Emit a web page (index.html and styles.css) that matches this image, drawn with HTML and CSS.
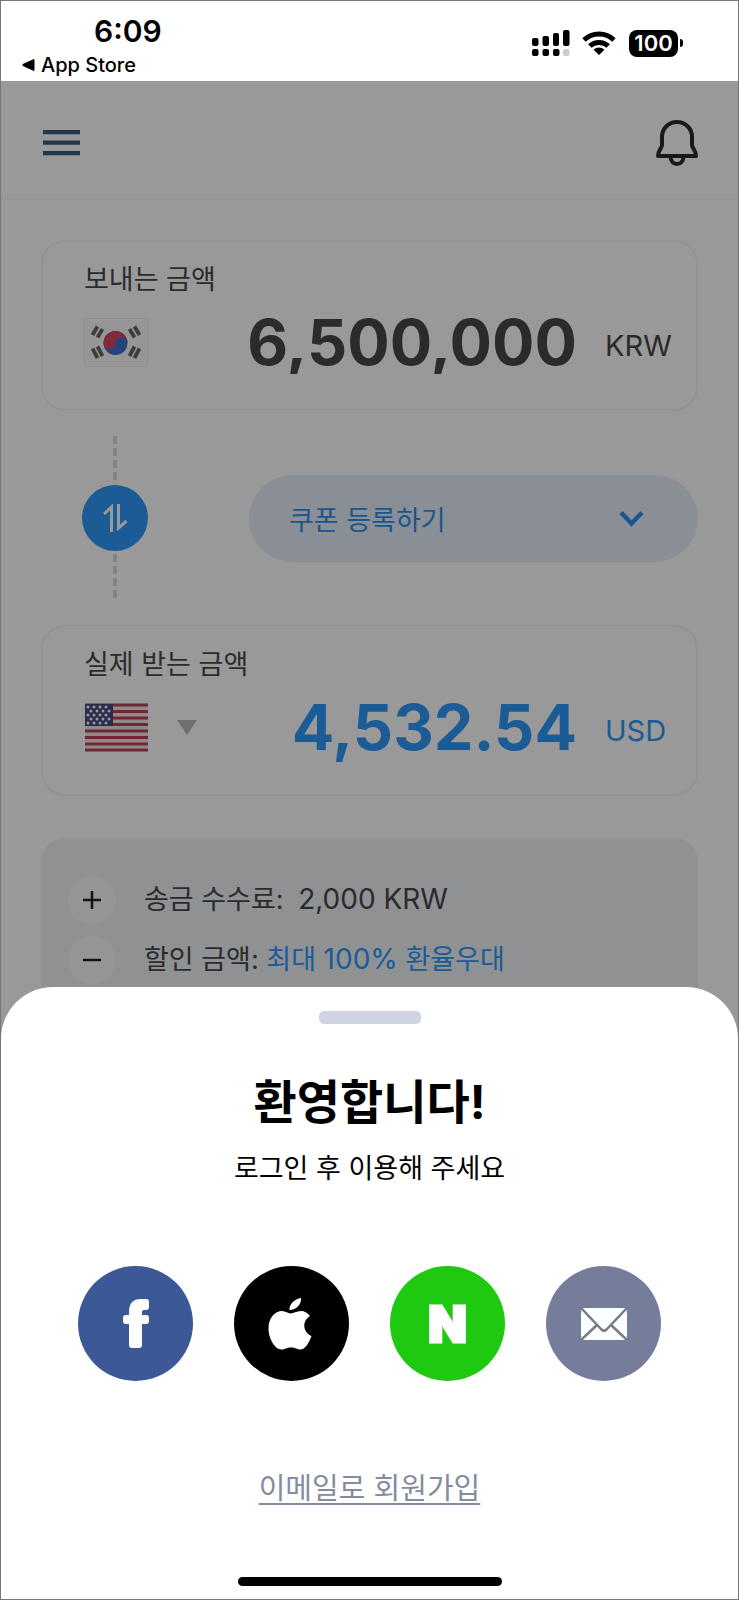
FILE: index.html
```html
<!DOCTYPE html>
<html lang="ko">
<head>
<meta charset="utf-8">
<meta name="viewport" content="width=device-width, initial-scale=1">
<title>환영합니다!</title>
<link rel="stylesheet" href="styles.css">
</head>
<body>
<div class="screen">
  <div class="status-bar">
    <div class="status-left">
      <span class="clock">6:09</span>
      <a class="back-app" href="#">
        <svg width="13" height="14" viewBox="0 0 13 14" aria-hidden="true"><path d="M12 1.500v11L1 7.600Q0 7 1 6.400z" fill="#000" stroke="#000" stroke-linejoin="round"/></svg>
        <span>App Store</span>
      </a>
    </div>
    <div class="status-right">
      <svg width="38" height="26" viewBox="0 0 38 26" aria-hidden="true">
        <rect x="0" y="8" width="6.500" height="8" rx="2"/><rect x="10.500" y="6" width="6.500" height="10" rx="2"/><rect x="21" y="3" width="6" height="13" rx="2"/><rect x="31" y="0" width="6.500" height="16" rx="2"/>
        <rect x="0" y="19" width="6.500" height="7" rx="2"/><rect x="10.500" y="19" width="6.500" height="7" rx="2"/><rect x="21" y="19" width="6.500" height="7" rx="2"/><rect x="31" y="19" width="6.500" height="7" rx="2" fill="#ccc"/>
      </svg>
      <svg class="wifi" width="34" height="24" viewBox="0 0 34 24" aria-hidden="true">
        <g fill="none" stroke="#000" stroke-width="5"><path d="M2 9a21.500 21.500 0 0 1 30 0"/><path d="M7.800 15a13.500 13.500 0 0 1 18.400 0"/></g>
        <path d="M11.500 18.800a8 8 0 0 1 11 0L17 24z"/>
      </svg>
      <span class="battery"><span class="battery-level">100</span></span>
    </div>
  </div>

  <div class="stage">
    <div class="app">
      <header class="app-header">
        <button class="icon-button" type="button" aria-label="메뉴">
          <svg width="37" height="26" viewBox="0 0 37 26"><path d="M0 2.200h37M0 12.700h37M0 23.200h37" stroke="#3c5a82" stroke-width="4.200"/></svg>
        </button>
        <button class="icon-button" type="button" aria-label="알림">
          <svg width="42" height="46" viewBox="0 0 42 46"><g fill="none" stroke="#2b2b2b" stroke-width="4" stroke-linejoin="round"><path d="M21 2C12 2 6 9 6 17v8c0 3-4 5-4 11h38c0-6-4-8-4-11v-8C36 9 30 2 21 2z"/><path d="M14.500 36c0 5 3 8 6.500 8s6.500-3 6.500-8"/></g></svg>
        </button>
      </header>

      <main class="content">
        <section class="card">
          <label class="card-label" for="send">보내는 금액</label>
          <div class="card-row">
            <svg class="flag" width="64" height="49" viewBox="0 0 64 49" aria-hidden="true">
              <rect x=".5" y=".5" width="63" height="48" rx="2" fill="#fafafa" stroke="#ececec"/>
              <circle cx="31.500" cy="25" r="12" fill="#3f73cc"/><path d="M19.500 25a12 12 0 0 1 24 0a6 6 0 0 0-12 0a6 6 0 0 1-12 0" fill="#d94561"/>
              <g stroke="#666" stroke-width="3.800"><path d="M8.500 17l5-8.500M13.500 19.500l5-8.500M8.500 30.500l5 9.500M13.500 28.500l5 9.500M55.500 17l-5-8.500M50.500 19.500l-5-8.500M55.500 30.500l-5 9.500M50.500 28.500l-5 9.500"/></g>
            </svg>
            <input class="amount" id="send" type="text" inputmode="numeric" value="6,500,000">
            <span class="currency">KRW</span>
          </div>
        </section>

        <div class="exchange">
          <div class="connector">
            <span class="dash"></span>
            <button class="swap" type="button" aria-label="통화 바꾸기">
              <svg width="25" height="28" viewBox="0 0 25 28"><path d="M1 10l7.500-7v25M15.500 0v24l8-7" fill="none" stroke="#fff" stroke-width="3"/></svg>
            </button>
            <span class="dash"></span>
          </div>
          <button class="coupon" type="button">
            <span>쿠폰 등록하기</span>
            <svg width="25" height="17" viewBox="0 0 25 17" aria-hidden="true"><path d="M2 2.500l10.500 11L23 2.500" fill="none" stroke="#2f90ef" stroke-width="4.500"/></svg>
          </button>
        </div>

        <section class="card">
          <label class="card-label" for="receive">실제 받는 금액</label>
          <div class="card-row">
            <button class="country" type="button" aria-label="받는 나라 선택">
              <svg class="flag" width="64" height="49" viewBox="0 0 64 49" aria-hidden="true">
                <rect x="1" y="1" width="63" height="47" fill="#f4e4e8"/>
                <path d="M1 2h63M1 8.500h63M1 15h63M1 21.500h63M1 28h63M1 34.500h63M1 41h63M1 47h63" stroke="#bd4058" stroke-width="3"/>
                <rect x="1" y="1" width="28" height="22" fill="#48487c"/>
                <path d="M4 4h24M7 8h20M4 12h24M7 16h20M4 20h24" stroke="#fff" stroke-width="3" stroke-linecap="round" stroke-dasharray="0 6"/>
              </svg>
              <svg width="20" height="15" viewBox="0 0 20 15" aria-hidden="true"><path d="M0 0h20L10 15z" fill="#bbb"/></svg>
            </button>
            <output class="amount accent" id="receive">4,532.54</output>
            <span class="currency accent">USD</span>
          </div>
        </section>

        <section class="fees">
          <div class="fee">
            <span class="sign"><svg width="18" height="18" viewBox="0 0 18 18"><path d="M0 9h18M9 0v18" stroke="#222" stroke-width="2.500"/></svg></span>
            <p class="fee-text">송금 수수료: <span class="fee-value">2,000 KRW</span></p>
          </div>
          <div class="fee">
            <span class="sign"><svg width="18" height="18" viewBox="0 0 18 18"><path d="M0 9h18" stroke="#222" stroke-width="2.500"/></svg></span>
            <p class="fee-text">할인 금액: <span class="accent">최대 <span class="latin">100%</span> 환율우대</span></p>
          </div>
        </section>
      </main>
    </div>

    <div class="backdrop">
      <section class="sheet" role="dialog" aria-labelledby="welcome">
        <span class="handle"></span>
        <h1 class="title" id="welcome">환영합니다!</h1>
        <p class="subtitle">로그인 후 이용해 주세요</p>
        <div class="logins">
          <button class="login facebook" type="button" aria-label="Facebook">
            <svg width="28" height="51" viewBox="0 0 28 51"><path d="M8 16V14C8 6 12 2 19 2h5q2 0 2 2v5q0 2-2 2h-2q-3 0-3 3v4h5q2 0 2 2v3q0 2-2 2h-5v22q0 2-2 2h-7q-2 0-2-2V25H4q-2 0-2-2v-3q0-2 2-2h4z" fill="#fff" stroke="#fff" stroke-width="2" stroke-linejoin="round"/></svg>
          </button>
          <button class="login apple" type="button" aria-label="Apple">
            <svg width="44" height="52" viewBox="2 0 44 52" fill="#fff" overflow="visible"><path d="M33 0c.600 6-4.500 12-11.500 12C20.800 6.500 26.500 1 33 0z"/><path d="M22.500 15.500c3 0 6-2.500 10.500-2.500 3.500 0 7 2 9 5-8.500 5-7 16.500 1.500 20C41 45 37 51.500 32.500 51.500c-3.500 0-5-2-9.500-2s-6 2-9.500 2C7 51.500.500 40.500.500 30.500c0-11 6.500-17.500 13.500-17.500 3.500 0 6 2.500 8.500 2.500z"/></svg>
          </button>
          <button class="login naver" type="button" aria-label="Naver">N</button>
          <button class="login email" type="button" aria-label="이메일">
            <svg width="46" height="32" viewBox="0 0 46 32"><rect width="46" height="32" rx="1" fill="#fbffff"/><path d="M0 0l20.500 21.500q2.500 2.500 5 0L46 0M0 32l16-15M46 32L30 17" fill="none" stroke="#777b88" stroke-width="2.500"/></svg>
          </button>
        </div>
        <a class="signup" href="#">이메일로 회원가입</a>
        <span class="home-indicator"></span>
      </section>
    </div>
  </div>
</div>
</body>
</html>
```

FILE: styles.css
```css
* {
  box-sizing: border-box;
}

body {
  margin: 0;
  background: #fff;
  color: #494949;
  font-family: Inter, "Noto Sans CJK KR", sans-serif;
  font-size: 27px;
}

button {
  margin: 0;
  padding: 0;
  border: 0;
  background: none;
  color: inherit;
  font: inherit;
}

svg {
  display: block;
  flex: none;
}

.screen {
  display: flex;
  flex-direction: column;
  min-height: 100vh;
  border: 1px solid #777;
}

/* Status bar */
.status-bar {
  display: flex;
  justify-content: space-between;
  height: 80px;
  padding: 10px 55px 0 21px;
  color: #000;
}

.status-left {
  display: flex;
  flex-direction: column;
}

.clock {
  padding-left: 72px;
  font-size: 30px;
  font-weight: 600;
  line-height: 40px;
}

.back-app {
  display: flex;
  align-items: center;
  gap: 6px;
  color: #000;
  font-size: 20px;
  font-weight: 500;
  line-height: 28px;
  text-decoration: none;
}

.status-right {
  display: flex;
  align-items: center;
  height: 64px;
}

.wifi {
  margin: 0 13px 0 12px;
}

.battery {
  display: flex;
  align-items: center;
  gap: 2px;
}

.battery::after {
  width: 3px;
  height: 8px;
  border-radius: 0 4px 4px 0;
  background: #000;
  content: "";
}

.battery-level {
  width: 49px;
  border-radius: 8px;
  background: #000;
  color: #fff;
  font-size: 22px;
  font-weight: 600;
  line-height: 27px;
  text-align: center;
}

/* Transfer screen */
.stage {
  position: relative;
  flex: 1;
}

.app-header {
  display: flex;
  align-items: center;
  justify-content: space-between;
  height: 119px;
  padding: 6px 40px 0 42px;
  border-bottom: 2px solid #f9f9f9;
}

.content {
  padding: 40px 40px 0;
}

.card {
  padding: 20px 26px 35px 41px;
  border: 2px solid #f5f5f5;
  border-radius: 24px;
}

.card-label {
  display: block;
  margin-bottom: 12px;
  line-height: 36px;
}

.card-row {
  display: flex;
  align-items: center;
  height: 64px;
}

.country {
  display: flex;
  align-items: center;
  gap: 29px;
}

.amount {
  flex: 1;
  min-width: 0;
  padding: 0;
  border: 0;
  background: none;
  color: #494949;
  font-family: inherit;
  font-size: 63px;
  font-weight: 700;
  line-height: 64px;
  text-align: right;
}

.currency {
  width: 93px;
  padding: 6px 0 0 28px;
  font-size: 29px;
}

.accent {
  color: #2f99fa;
}

.exchange {
  display: flex;
  align-items: center;
  gap: 101px;
  padding: 25px 0 25px 41px;
}

.connector {
  display: flex;
  flex-direction: column;
  align-items: center;
  gap: 3px;
}

.dash {
  width: 4px;
  height: 46px;
  background: repeating-linear-gradient(#dadada 0 8px, transparent 8px 12px);
}

.swap {
  display: grid;
  place-items: center;
  width: 66px;
  height: 66px;
  border-radius: 50%;
  background: #2f99fa;
}

.coupon {
  display: flex;
  flex: 1;
  align-items: center;
  justify-content: space-between;
  height: 87px;
  padding: 0 54px 0 40px;
  border-radius: 44px;
  background: #e7eef9;
  color: #2f90ef;
}

.fees {
  display: flex;
  flex-direction: column;
  gap: 11px;
  margin-top: 42px;
  padding: 37px 27px;
  border-radius: 24px;
  background: #eef2f4;
}

.fee {
  display: flex;
  align-items: center;
  gap: 28px;
}

.sign {
  display: grid;
  flex: none;
  place-items: center;
  width: 48px;
  height: 48px;
  border-radius: 50%;
  background: #f9f9f9;
}

.fee-text {
  margin: 0;
  line-height: 48px;
}

.fee-value {
  padding-left: 7px;
  font-size: 28px;
}

.latin {
  font-size: 28px;
}

/* Login sheet */
.backdrop {
  position: absolute;
  inset: 0;
  display: flex;
  align-items: flex-end;
  background: rgba(0, 0, 0, 0.4);
}

.sheet {
  display: flex;
  flex: 1;
  flex-direction: column;
  align-items: center;
  padding: 24px 24px 13px;
  border-radius: 52px 52px 0 0;
  background: #fff;
  color: #000;
}

.handle {
  width: 102px;
  height: 13px;
  border-radius: 5px;
  background: #cfd4e2;
}

.title {
  margin: 46px 0 0;
  font-size: 47px;
  font-weight: 700;
  line-height: 64px;
}

.subtitle {
  margin: 17px 0 0;
  line-height: 36px;
}

.logins {
  display: flex;
  gap: 41px;
  margin-top: 79px;
}

.login {
  display: grid;
  place-items: center;
  width: 115px;
  height: 115px;
  border-radius: 50%;
  color: #fff;
}

.facebook {
  background: #3c5897;
}

.apple {
  background: #000;
}

.naver {
  background: #20c911;
  font-size: 50px;
  font-weight: 900;
  -webkit-text-stroke: 3px #fff;
}

.email {
  background: #767d9b;
}

.signup {
  margin-top: 88px;
  color: #858ba0;
  font-size: 29px;
  line-height: 40px;
  text-underline-offset: 4px;
}

.home-indicator {
  width: 264px;
  height: 9px;
  margin-top: 68px;
  border-radius: 5px;
  background: #000;
}
```
